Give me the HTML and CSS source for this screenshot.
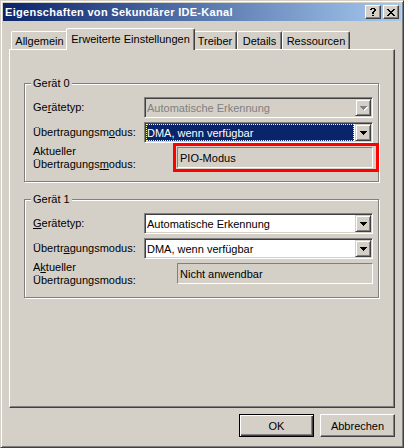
FILE: index.html
```html
<!DOCTYPE html>
<html lang="de">
<head>
<meta charset="utf-8">
<link rel="stylesheet" href="styles.css">
</head>
<body>
<div class="window">
  <div class="titlebar">
    <span class="title">Eigenschaften von Sekundärer IDE-Kanal</span>
    <div class="capbtns">
      <div class="capbtn"><svg width="6" height="8" viewBox="0 0 6 8" shape-rendering="crispEdges"><path d="M1 0h4v1H1zM0 1h2v1H0zM4 1h2v1H4zM4 2h2v1H4zM3 3h2v1H3zM2 4h2v1H2zM2 5h2v1H2zM2 7h2v1H2z"/></svg></div>
      <div class="capbtn"><svg width="8" height="7" viewBox="0 0 8 7" shape-rendering="crispEdges"><path d="M0 0h2v1H0zM6 0h2v1H6zM1 1h2v1H1zM5 1h2v1H5zM2 2h4v1H2zM3 3h2v1H3zM2 4h4v1H2zM1 5h2v1H1zM5 5h2v1H5zM0 6h2v1H0zM6 6h2v1H6z"/></svg></div>
    </div>
  </div>

  <div class="tabs">
    <div class="tab w-allg">Allgemein</div>
    <div class="tab active w-erw">Erweiterte Einstellungen</div>
    <div class="tab w-trb">Treiber</div>
    <div class="tab w-det">Details</div>
    <div class="tab w-res">Ressourcen</div>
  </div>

  <div class="panel">
    <div class="group">
      <span class="legend">Gerät 0</span>
      <div class="row">
        <span class="lbl">Ge<u>r</u>ätetyp:</span>
        <div class="combo disabled">
          <span class="ctext">Automatische Erkennung</span>
          <span class="cbtn"><svg width="7" height="4" viewBox="0 0 7 4" shape-rendering="crispEdges"><path d="M0 0h7v1H0zM1 1h5v1H1zM2 2h3v1H2zM3 3h1v1H3z"/></svg></span>
        </div>
      </div>
      <div class="row">
        <span class="lbl">Übertragungsm<u>o</u>dus:</span>
        <div class="combo">
          <span class="ctext sel">DMA, wenn verfügbar</span>
          <span class="cbtn"><svg width="7" height="4" viewBox="0 0 7 4" shape-rendering="crispEdges"><path d="M0 0h7v1H0zM1 1h5v1H1zM2 2h3v1H2zM3 3h1v1H3z"/></svg></span>
        </div>
      </div>
      <div class="row srow">
        <span class="lbl">Aktueller<br>Übertragungs<u>m</u>odus:</span>
        <div class="field">PIO-Modus<span class="mark"></span></div>
      </div>
    </div>

    <div class="group g1">
      <span class="legend">Gerät 1</span>
      <div class="row">
        <span class="lbl"><u>G</u>erätetyp:</span>
        <div class="combo">
          <span class="ctext">Automatische Erkennung</span>
          <span class="cbtn"><svg width="7" height="4" viewBox="0 0 7 4" shape-rendering="crispEdges"><path d="M0 0h7v1H0zM1 1h5v1H1zM2 2h3v1H2zM3 3h1v1H3z"/></svg></span>
        </div>
      </div>
      <div class="row">
        <span class="lbl">Übertr<u>a</u>gungsmodus:</span>
        <div class="combo">
          <span class="ctext">DMA, wenn verfügbar</span>
          <span class="cbtn"><svg width="7" height="4" viewBox="0 0 7 4" shape-rendering="crispEdges"><path d="M0 0h7v1H0zM1 1h5v1H1zM2 2h3v1H2zM3 3h1v1H3z"/></svg></span>
        </div>
      </div>
      <div class="row srow">
        <span class="lbl">A<u>k</u>tueller<br>Übertragungsmodus:</span>
        <div class="field">Nicht anwendbar</div>
      </div>
    </div>
  </div>

  <div class="buttons">
    <button class="btn default">OK</button>
    <button class="btn">Abbrechen</button>
  </div>
</div>
</body>
</html>
```

FILE: styles.css
```css
html, body {
  margin: 0;
  padding: 0;
  background: #D4D0C8;
}
body {
  font-family: "Liberation Sans", Arial, sans-serif;
  font-size: 11px;
  color: #000;
}
.window {
  width: 404px;
  height: 448px;
  box-sizing: border-box;
  border: 1px solid;
  border-color: #D4D0C8 #404040 #404040 #D4D0C8;
  box-shadow: inset 1px 1px 0 #fff, inset -1px -1px 0 #808080;
  padding: 2px;
  background: #D4D0C8;
  display: flex;
  flex-direction: column;
}
.titlebar {
  height: 18px;
  flex: none;
  background: linear-gradient(to right, #0A246A, #A6CAF0);
  display: flex;
  align-items: center;
  padding-left: 2px;
}
.title {
  flex: 1;
  color: #fff;
  font-weight: bold;
  letter-spacing: 0.3px;
  white-space: nowrap;
}
.capbtns {
  display: flex;
  gap: 2px;
  margin-right: 2px;
}
.capbtn {
  width: 16px;
  height: 14px;
  box-sizing: border-box;
  background: #D4D0C8;
  border: 1px solid;
  border-color: #fff #404040 #404040 #fff;
  box-shadow: inset -1px -1px 0 #808080;
  display: flex;
  align-items: center;
  justify-content: center;
}
.capbtn svg { display: block; }

.tabs {
  display: flex;
  align-items: flex-end;
  height: 21px;
  flex: none;
  margin: 7px 0 0 8px;
  position: relative;
  z-index: 1;
}
.tab {
  height: 18px;
  box-sizing: border-box;
  border-left: 1px solid #fff;
  border-top: 1px solid #fff;
  border-right: 1px solid #404040;
  box-shadow: inset -1px 0 0 #808080;
  border-radius: 2px 2px 0 0;
  background: #D4D0C8;
  display: flex;
  align-items: center;
  justify-content: center;
  white-space: nowrap;
}
.tab.active {
  height: 22px;
  margin: 0 -2px -1px;
  padding-bottom: 1px;
  position: relative;
}
.w-allg { width: 57px; }
.w-erw { width: 129px; }
.w-trb { width: 44px; }
.w-det { width: 45px; }
.w-res { width: 68px; }

.panel {
  width: 386px;
  height: 359px;
  flex: none;
  box-sizing: border-box;
  margin-left: 6px;
  border: 1px solid;
  border-color: #fff #404040 #404040 #fff;
  box-shadow: inset -1px -1px 0 #808080;
  padding: 33px 0 0 14px;
}
.group {
  position: relative;
  width: 355px;
  height: 99px;
  box-sizing: border-box;
  border: 1px solid #808080;
  box-shadow: inset 1px 1px 0 #fff, 1px 1px 0 #fff;
  padding: 13px 0 0 8px;
}
.group.g1 {
  margin-top: 17px;
}
.legend {
  position: absolute;
  top: -7px;
  left: 6px;
  padding: 0 2px;
  line-height: 13px;
  background: #D4D0C8;
}
.row {
  display: flex;
  align-items: center;
  height: 21px;
  margin-bottom: 4px;
}
.row.srow {
  margin-top: 2px;
}
.lbl {
  width: 111px;
  flex: none;
  line-height: 13px;
}
.combo {
  width: 229px;
  height: 21px;
  box-sizing: border-box;
  border: 1px solid;
  border-color: #808080 #fff #fff #808080;
  box-shadow: inset 1px 1px 0 #404040, inset -1px -1px 0 #D4D0C8;
  padding: 1px;
  background: #fff;
  display: flex;
}
.ctext {
  flex: 1;
  padding-left: 1px;
  display: flex;
  align-items: center;
  margin-right: 1px;
  white-space: nowrap;
}
.ctext.sel {
  background: #0A246A;
  color: #fff;
  outline: 1px dotted #FFFF9C;
  outline-offset: -1px;
}
.cbtn {
  width: 16px;
  height: 17px;
  box-sizing: border-box;
  background: #D4D0C8;
  border: 1px solid;
  border-color: #D4D0C8 #404040 #404040 #D4D0C8;
  box-shadow: inset 1px 1px 0 #fff, inset -1px -1px 0 #808080;
  display: flex;
  align-items: center;
  justify-content: center;
}
.cbtn svg { display: block; }
.combo.disabled {
  background: #D4D0C8;
}
.combo.disabled .ctext {
  color: #808080;
}
.combo.disabled .cbtn svg {
  fill: #808080;
  filter: drop-shadow(1px 1px 0 #fff);
}
.field {
  position: relative;
  width: 196px;
  height: 21px;
  box-sizing: border-box;
  margin-left: 33px;
  border: 1px solid;
  border-color: #808080 #fff #fff #808080;
  background: #D4D0C8;
  padding-left: 2px;
  display: flex;
  align-items: center;
}
.mark {
  position: absolute;
  left: -5px;
  right: -7px;
  top: -5px;
  bottom: -5px;
  border: 3px solid #FF0000;
}
.buttons {
  display: flex;
  justify-content: flex-end;
  gap: 6px;
  margin: 6px 6px 0 0;
}
.btn {
  width: 75px;
  height: 23px;
  box-sizing: border-box;
  border: 1px solid;
  border-color: #fff #404040 #404040 #fff;
  box-shadow: inset -1px -1px 0 #808080;
  background: #D4D0C8;
  font: inherit;
  color: #000;
  padding: 0;
}
.btn.default {
  border: 1px solid #000;
  box-shadow: inset 1px 1px 0 #fff, inset -1px -1px 0 #404040, inset -2px -2px 0 #808080;
}
```
